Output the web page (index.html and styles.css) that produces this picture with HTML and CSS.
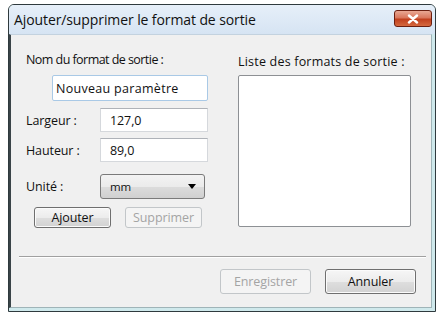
FILE: index.html
```html
<!DOCTYPE html>
<html lang="fr">
<head>
  <meta charset="UTF-8">
  <title>Ajouter/supprimer le format de sortie</title>
  <link rel="stylesheet" href="styles.css">
</head>
<body>
  <div class="fenetre">
    <div class="titre">
      <span>Ajouter/supprimer le format de sortie</span>
      <div class="fermer">
        <svg width="14" height="10" viewBox="0 0 14 10">
          <path d="M3 1.5 L11 8.5 M11 1.5 L3 8.5" stroke="#fff" stroke-width="2.4" stroke-linecap="round"/>
        </svg>
      </div>
    </div>
    <div class="client">
      <div class="haut">
        <div class="col-gauche">
          <div class="etiquette">Nom du format de sortie :</div>
          <input class="champ champ-nom" type="text" value="Nouveau paramètre">
          <div class="ligne ligne-1">
            <label>Largeur :</label>
            <input class="champ" type="text" value="127,0">
          </div>
          <div class="ligne ligne-2">
            <label>Hauteur :</label>
            <input class="champ" type="text" value="89,0">
          </div>
          <div class="ligne ligne-3">
            <label>Unité :</label>
            <div class="liste-deroulante">
              <span>mm</span>
              <svg width="8" height="5" viewBox="0 0 8 5"><path d="M0 0 H8 L4 5 Z" fill="#000"/></svg>
            </div>
          </div>
          <div class="boutons-gauche">
            <button class="bouton bouton-fort">Ajouter</button>
            <button class="bouton" disabled>Supprimer</button>
          </div>
        </div>
        <div class="col-droite">
          <div class="etiquette">Liste des formats de sortie :</div>
          <div class="liste"></div>
        </div>
      </div>
      <div class="separateur"></div>
      <div class="pied">
        <button class="bouton" disabled>Enregistrer</button>
        <button class="bouton bouton-fort">Annuler</button>
      </div>
    </div>
  </div>
</body>
</html>
```

FILE: styles.css
```css
body { margin: 0; background: #fff; font-family: "Open Sans", "Noto Sans", sans-serif; font-size: 12.5px; letter-spacing: -0.1px; color: #111; }
.fenetre { margin: 4px 0 0 8px; width: 423px; border: 1px solid #2f3a3e; border-radius: 6px 6px 0 0; background: #cfe9ec; padding: 0 3px 3px 0; }
.titre { height: 29px; display: flex; align-items: center; justify-content: space-between; padding-left: 5px; margin-right: -3px; background: linear-gradient(#e6eff9, #d6e4f3); border-radius: 5px 5px 0 0; font-size: 14px; letter-spacing: -0.1px; color: #111; }
.fermer { width: 36px; height: 15px; margin-right: 3px; margin-top: -2px; border: 1px solid #6b1f10; border-radius: 3px; background: linear-gradient(#e9a894 0%, #d9775d 45%, #c1401e 55%, #d5693f 100%); display: flex; align-items: center; justify-content: center; }
.client { height: 272px; background: #f0f0f0; border-left: 2px solid #3a4448; border-bottom: 1px solid #9fb4b8; border-right: 1px solid #9fb4b8; border-top: 1px solid #c3d2df; }
.haut { display: flex; height: 194px; }
.col-gauche { width: 200px; padding-left: 15px; }
.col-droite { padding-left: 12px; }
.etiquette { line-height: 14px; margin-top: 18px; }
.col-gauche .etiquette { letter-spacing: -0.55px; }
.col-droite .etiquette { margin-top: 20px; letter-spacing: 0.2px; }
.champ { display: block; box-sizing: border-box; height: 24px; width: 108px; margin: 0; border: 1px solid #d5d8dc; border-top-color: #aeb2b8; background: #fff; padding: 0 9px; font: inherit; letter-spacing: inherit; color: #111; }
.champ-nom { margin: 8px 0 0 26px; width: 156px; height: 26px; border: 1px solid #a9c9e6; border-radius: 2px; padding: 0 3px; letter-spacing: 0.3px; }
.ligne { display: flex; align-items: center; }
.ligne label { width: 74px; }
.ligne-1 { margin-top: 7px; }
.ligne-2 { margin-top: 6px; }
.ligne-3 { margin-top: 12px; }
.liste-deroulante { box-sizing: border-box; width: 105px; height: 25px; border: 1px solid #7a7a7a; border-radius: 3px; background: linear-gradient(#f3f3f3 0%, #ebebeb 50%, #dcdcdc 51%, #d0d0d0 100%); display: flex; align-items: center; justify-content: space-between; padding: 0 8px 0 9px; font-size: 11.5px; }
.boutons-gauche { display: flex; gap: 14px; margin: 8px 0 0 8px; }
.bouton { box-sizing: border-box; width: 77px; height: 21px; padding: 0; border: 1px solid #9a9a9a; border-radius: 3px; background: linear-gradient(#f6f6f6 0%, #ececec 50%, #dedede 51%, #d2d2d2 100%); font: inherit; letter-spacing: inherit; color: #111; }
.bouton-fort { border-color: #6f6f6f; box-shadow: inset 0 0 0 1px #fbfbfb; }
.bouton:disabled { border-color: #c2c6c9; background: #f4f4f4; color: #a4a4a4; }
.liste { box-sizing: border-box; width: 173px; height: 152px; margin-top: 6px; background: #fff; border: 1px solid #8d9094; border-radius: 2px; }
.separateur { height: 1px; margin: 27px 5px 0 8px; background: #a0a0a0; border-bottom: 1px solid #fff; }
.pied { display: flex; justify-content: flex-end; gap: 14px; margin-top: 11px; padding-right: 15px; }
.pied .bouton { width: 91px; height: 25px; }
```
